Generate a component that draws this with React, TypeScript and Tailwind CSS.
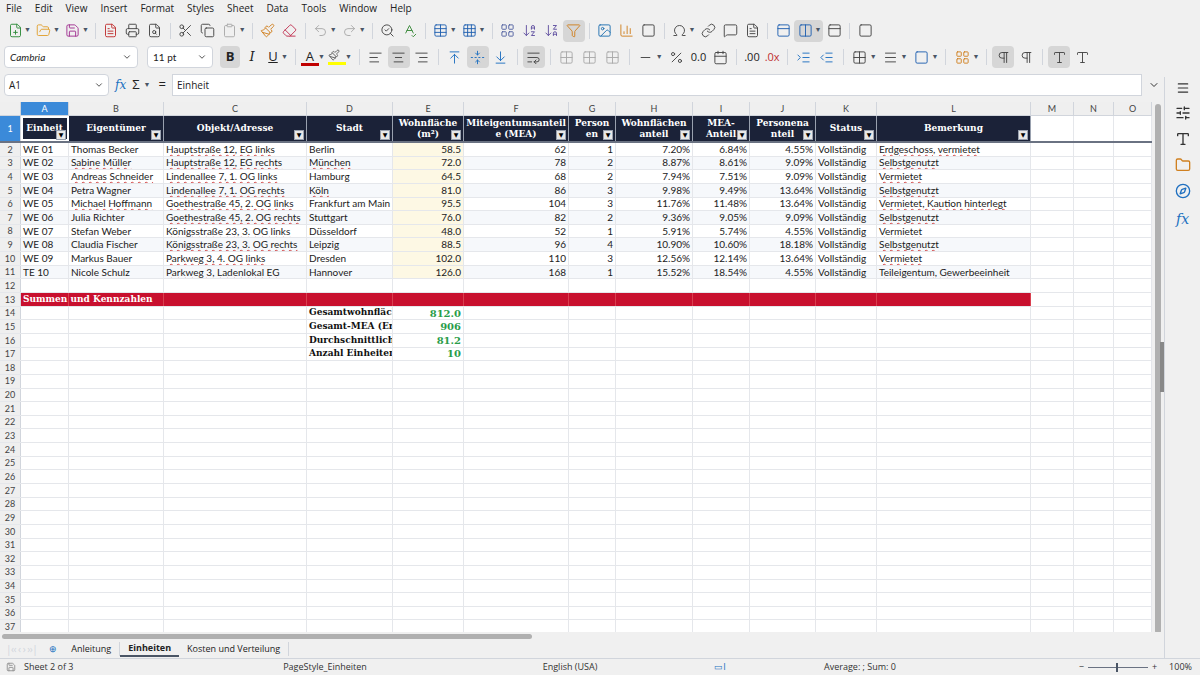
import React from "react";
import {
  FilePlus, FolderOpen, Save, FileText, Printer, FileSearch, Scissors, Copy, Clipboard, Paintbrush, Eraser,
  Undo2, Redo2, SearchCheck, SpellCheck, Table, Grid3x3, ArrowDownAZ, ArrowDownZA, Filter, Image, BarChart3,
  Square, Omega, Link, MessageSquare, PanelTop, Columns2, LayoutGrid, AlignLeft, AlignCenter, AlignRight,
  ArrowUpToLine, FoldVertical, ArrowDownToLine, WrapText, Percent, Calendar, IndentIncrease, IndentDecrease,
  Grid2x2, Minus, Pilcrow, SlidersHorizontal, Type, Folder, Compass, ChevronDown, Menu
} from "lucide-react";

const cols: [string, number][] = [
  ["A", 48], ["B", 95], ["C", 143], ["D", 86], ["E", 71], ["F", 105], ["G", 47], ["H", 77],
  ["I", 57], ["J", 66], ["K", 61], ["L", 154], ["M", 43], ["N", 40], ["O", 38],
];
const RH = 13.65;

const headers = ["Einheit", "Eigentümer", "Objekt/Adresse", "Stadt", "Wohnfläche\n(m²)", "Miteigentumsanteil\ne (MEA)", "Person\nen", "Wohnflächen\nanteil", "MEA-\nAnteil", "Personena\nnteil", "Status", "Bemerkung"];

const data = [
  ["WE 01", "Thomas Becker", "Hauptstraße 12, EG links", "Berlin", "58.5", "62", "1", "7.20%", "6.84%", "4.55%", "Vollständig", "Erdgeschoss, vermietet"],
  ["WE 02", "Sabine Müller", "Hauptstraße 12, EG rechts", "München", "72.0", "78", "2", "8.87%", "8.61%", "9.09%", "Vollständig", "Selbstgenutzt"],
  ["WE 03", "Andreas Schneider", "Lindenallee 7, 1. OG links", "Hamburg", "64.5", "68", "2", "7.94%", "7.51%", "9.09%", "Vollständig", "Vermietet"],
  ["WE 04", "Petra Wagner", "Lindenallee 7, 1. OG rechts", "Köln", "81.0", "86", "3", "9.98%", "9.49%", "13.64%", "Vollständig", "Selbstgenutzt"],
  ["WE 05", "Michael Hoffmann", "Goethestraße 45, 2. OG links", "Frankfurt am Main", "95.5", "104", "3", "11.76%", "11.48%", "13.64%", "Vollständig", "Vermietet, Kaution hinterlegt"],
  ["WE 06", "Julia Richter", "Goethestraße 45, 2. OG rechts", "Stuttgart", "76.0", "82", "2", "9.36%", "9.05%", "9.09%", "Vollständig", "Selbstgenutzt"],
  ["WE 07", "Stefan Weber", "Königsstraße 23, 3. OG links", "Düsseldorf", "48.0", "52", "1", "5.91%", "5.74%", "4.55%", "Vollständig", "Vermietet"],
  ["WE 08", "Claudia Fischer", "Königsstraße 23, 3. OG rechts", "Leipzig", "88.5", "96", "4", "10.90%", "10.60%", "18.18%", "Vollständig", "Selbstgenutzt"],
  ["WE 09", "Markus Bauer", "Parkweg 3, 4. OG links", "Dresden", "102.0", "110", "3", "12.56%", "12.14%", "13.64%", "Vollständig", "Vermietet"],
  ["TE 10", "Nicole Schulz", "Parkweg 3, Ladenlokal EG", "Hannover", "126.0", "168", "1", "15.52%", "18.54%", "4.55%", "Vollständig", "Teileigentum, Gewerbeeinheit"],
];
const rightCols = new Set([4, 5, 6, 7, 8, 9]);
const summary = [["Gesamtwohnfläch", "812.0"], ["Gesamt-MEA (Erw", "906"], ["Durchschnittliche", "81.2"], ["Anzahl Einheiten", "10"]];

const sans = { fontFamily: "Lato, 'Open Sans', sans-serif" };
const serif = { fontFamily: "'DejaVu Serif', 'Liberation Serif', serif" };

function Ico({ I, c = "#444" }: { I: any; c?: string }) {
  return <span className="flex items-center justify-center w-[22px] h-[22px]"><I size={15} color={c} strokeWidth={1.5} /></span>;
}
function Dd() { return <span className="text-[7px] text-gray-600 -ml-0.5 mr-0.5">▼</span>; }
function Sep() { return <span className="w-px h-4 bg-gray-300 mx-1" />; }

function FilterBtn() {
  return <span className="absolute right-[2px] bottom-[1px] w-[10px] h-[10px] bg-[#e8e8e8] border border-gray-400 flex items-center justify-center text-[6px] text-black leading-none">▼</span>;
}

export default function App() {
  return (
    <div className="w-[1200px] h-[675px] bg-[#f0f0f0] flex flex-col overflow-hidden text-[#222]" style={{ fontFamily: "'Open Sans', 'Noto Sans', sans-serif" }}>
      <div className="h-[17px] flex items-center gap-[13px] px-[6px] text-[10px]">
        {["File", "Edit", "View", "Insert", "Format", "Styles", "Sheet", "Data", "Tools", "Window", "Help"].map(m => <span key={m}>{m}</span>)}
      </div>
      <div className="h-[27px] flex items-center px-[4px]">
        <Ico I={FilePlus} c="#2e8b3a" /><Dd /><Ico I={FolderOpen} c="#e0a030" /><Dd /><Ico I={Save} c="#a03090" /><Dd /><Sep />
        <Ico I={FileText} c="#c03030" /><Ico I={Printer} /><Ico I={FileSearch} /><Sep />
        <Ico I={Scissors} /><Ico I={Copy} /><Ico I={Clipboard} c="#aaa" /><Dd /><Sep />
        <Ico I={Paintbrush} c="#d08020" /><Ico I={Eraser} c="#c03050" /><Sep />
        <Ico I={Undo2} c="#aaa" /><Dd /><Ico I={Redo2} c="#aaa" /><Dd /><Sep />
        <Ico I={SearchCheck} /><Ico I={SpellCheck} c="#3a8a3a" /><Sep />
        <Ico I={Table} c="#2060b0" /><Dd /><Ico I={Grid3x3} c="#2060b0" /><Dd /><Sep />
        <Ico I={LayoutGrid} c="#5060a0" /><Ico I={ArrowDownAZ} c="#6050a0" /><Ico I={ArrowDownZA} c="#6050a0" />
        <span className="bg-[#d6d6d6] rounded"><Ico I={Filter} c="#d08020" /></span><Sep />
        <Ico I={Image} c="#2070b0" /><Ico I={BarChart3} c="#d08020" /><Ico I={Square} /><Sep />
        <Ico I={Omega} /><Dd /><Ico I={Link} /><Ico I={MessageSquare} /><Ico I={FileText} /><Sep />
        <Ico I={PanelTop} c="#2060b0" /><span className="bg-[#d6d6d6] rounded flex items-center"><Ico I={Columns2} c="#2060b0" /><Dd /></span><Ico I={PanelTop} /><Sep /><Ico I={Square} />
      </div>
      <div className="h-[26px] flex items-center px-[4px] gap-[1px]">
        <div className="w-[134px] h-[22px] bg-white border border-gray-300 rounded flex items-center justify-between px-[5px] text-[10px] italic" style={sans}>Cambria<ChevronDown size={10} color="#333" /></div>
        <div className="w-[66px] h-[22px] ml-[8px] bg-white border border-gray-300 rounded flex items-center justify-between px-[5px] text-[10px]" style={sans}>11 pt<ChevronDown size={10} color="#333" /></div>
        <span className="ml-[6px] w-[20px] h-[22px] bg-[#d6d6d6] rounded flex items-center justify-center font-bold text-[13px]">B</span>
        <span className="w-[22px] text-center italic text-[13px]" style={serif}>I</span>
        <span className="w-[18px] text-center underline text-[13px]">U</span><Dd /><Sep />
        <span className="w-[18px] text-center text-[13px] border-b-[3px] border-[#c00000] leading-[14px]">A</span><Dd />
        <span className="w-[18px] h-[16px] border-b-[3px] border-[#ffff00]"><Paintbrush size={12} color="#666" /></span><Dd /><Sep />
        <Ico I={AlignLeft} /><span className="bg-[#d6d6d6] rounded"><Ico I={AlignCenter} /></span><Ico I={AlignRight} /><Sep />
        <Ico I={ArrowUpToLine} c="#2070c0" /><span className="bg-[#d6d6d6] rounded"><Ico I={FoldVertical} c="#2070c0" /></span><Ico I={ArrowDownToLine} c="#2070c0" /><Sep />
        <span className="bg-[#d6d6d6] rounded"><Ico I={WrapText} /></span><Sep />
        <Ico I={Grid2x2} c="#aaa" /><Ico I={Grid2x2} c="#aaa" /><Ico I={Grid2x2} c="#aaa" /><Sep />
        <Ico I={Minus} /><Dd /><Ico I={Percent} /><span className="text-[11px] px-[2px]">0.0</span><Ico I={Calendar} /><Sep />
        <span className="text-[11px] px-[2px]">.00</span><span className="text-[11px] px-[2px] text-[#c03030]">.0x</span><Sep />
        <Ico I={IndentIncrease} c="#2070c0" /><Ico I={IndentDecrease} c="#2070c0" /><Sep />
        <Ico I={Grid2x2} /><Dd /><Ico I={Menu} /><Dd /><Ico I={Square} c="#2060b0" /><Dd /><Sep />
        <Ico I={LayoutGrid} c="#d08020" /><Dd /><Sep />
        <span className="bg-[#d6d6d6] rounded"><Ico I={Pilcrow} /></span><Ico I={Pilcrow} /><Sep />
        <span className="bg-[#d6d6d6] rounded"><Ico I={Type} /></span><Ico I={Type} />
      </div>
      <div className="h-[28px] flex items-center px-[4px] gap-[6px] mt-[1px]">
        <div className="w-[105px] h-[22px] bg-white border border-gray-300 rounded flex items-center justify-between px-[4px] text-[10px]">A1<ChevronDown size={10} color="#333" /></div>
        <span className="italic text-[#2070c0] text-[12px]" style={serif}>fx</span>
        <span className="text-[13px]">Σ</span><Dd /><span className="text-[13px]">=</span>
        <div className="flex-1 h-[22px] bg-white border border-gray-300 flex items-center px-[4px] text-[10px]">Einheit</div>
        <ChevronDown size={12} color="#333" />
        <div className="w-[30px]" />
      </div>
      <div className="flex flex-1 min-h-0">
        <div className="flex flex-col w-[1164px]">
          <div className="flex flex-1 min-h-0 mt-[3px]">
            <div className="flex-1 bg-white overflow-hidden text-[10px]" style={sans}>
              <div className="flex h-[14px] bg-[#efefef] border-b border-gray-300">
                <div className="w-[21px] border-r border-gray-300" />
                {cols.map(([n, w]) => (
                  <div key={n} style={{ width: w }} className={`shrink-0 flex items-center justify-center text-[9px] border-r border-gray-300 ${n === "A" ? "bg-[#3b8ad9] text-white" : "text-[#444]"}`}>{n}</div>
                ))}
              </div>
              <div className="flex h-[27px] border-b-2 border-gray-500">
                <div className="w-[21px] bg-[#3b8ad9] text-white text-[9px] flex items-center justify-center border-r border-gray-300">1</div>
                {cols.map(([n, w], i) => (
                  <div key={n} style={{ width: w, ...serif }} className={`shrink-0 relative ${i < 12 ? "bg-[#1b2238] text-white font-bold text-[9px] leading-[11px] border-r border-gray-400 flex items-center justify-center text-center whitespace-pre" : "border-r border-gray-200"} ${i === 0 ? "outline outline-2 outline-white -outline-offset-2" : ""}`}>
                    {i < 12 && <>{headers[i]}<FilterBtn /></>}
                  </div>
                ))}
              </div>
              {Array.from({ length: 36 }, (_, k) => {
                const r = k + 2;
                const d = r <= 11 ? data[r - 2] : null;
                const s = r >= 14 && r <= 17 ? summary[r - 14] : null;
                const red = r === 13;
                return (
                  <div key={r} className="flex border-b border-gray-200" style={{ height: RH }}>
                    <div className="w-[21px] shrink-0 bg-[#efefef] text-[9px] text-[#444] flex items-center justify-center border-r border-gray-300">{r}</div>
                    {cols.map(([n, w], i) => {
                      let content: React.ReactNode = null;
                      let cls = "border-r border-gray-200";
                      let st: React.CSSProperties = { width: w };
                      if (d && i < 12) {
                        content = d[i];
                        if (i === 4) cls += " bg-[#fdf8e4]";
                        else if (r % 2 === 1) cls += " bg-[#f6f8fb]";
                        if (rightCols.has(i)) cls += " justify-end";
                        if ((i === 2 || i === 11) || (i === 1 && [3, 4, 6].includes(r)) || (i === 3 && [3, 5].includes(r))) {
                          content = <span className="underline decoration-wavy decoration-[#d04040] decoration-[0.5px] underline-offset-1">{d[i]}</span>;
                        }
                      }
                      if (red && i < 12) {
                        cls = "bg-[#c8102e] border-r border-[#d84050] text-white font-bold text-[9px]";
                        st = { ...st, ...serif };
                        if (i === 0) content = <span className="whitespace-nowrap">Summen und Kennzahlen</span>;
                      }
                      if (s && i === 3) { content = <span className="whitespace-nowrap font-bold text-[9px] text-[#111]">{s[0]}</span>; st = { ...st, ...serif }; cls += " overflow-hidden"; }
                      if (s && i === 4) { content = s[1]; st = { ...st, ...serif }; cls += " justify-end font-bold text-[#2a9d4a]"; }
                      return <div key={n} style={st} className={`shrink-0 flex items-center px-[2px] whitespace-nowrap ${i !== 0 || !red ? "overflow-hidden" : "overflow-visible z-10"} ${cls}`}>{content}</div>;
                    })}
                  </div>
                );
              })}
            </div>
            <div className="w-[12px] bg-[#f0f0f0] relative">
              <div className="absolute left-[3px] top-[2px] w-[6px] h-[530px] bg-[#b0b0b0] rounded" />
              <div className="absolute left-[8px] top-[240px] w-[4px] h-[50px] bg-[#888]" />
            </div>
          </div>
          <div className="h-[8px] bg-[#f0f0f0] relative">
            <div className="absolute left-[2px] top-[2px] w-[530px] h-[5px] bg-[#b0b0b0] rounded" />
          </div>
          <div className="h-[18px] flex items-center text-[9px]">
            <span className="text-gray-300 px-[6px] text-[10px] tracking-tighter">|‹‹ ‹ › ››|</span>
            <span className="px-[6px] text-[#2070c0]">⊕</span>
            <span className="px-[8px] border-r border-gray-300">Anleitung</span>
            <span className="px-[8px] font-bold border-b-2 border-gray-600 h-[16px] flex items-center">Einheiten</span>
            <span className="px-[8px] border-r border-gray-300">Kosten und Verteilung</span>
          </div>
        </div>
        <div className="w-[36px] border-l border-gray-300 flex flex-col items-center gap-[10px] pt-[4px]" style={{ marginTop: -22 }}>
          <Menu size={14} color="#333" />
          <SlidersHorizontal size={16} color="#333" />
          <Type size={16} color="#333" />
          <Folder size={16} color="#d08020" />
          <Compass size={16} color="#2070c0" />
          <span className="italic text-[#2070c0] text-[14px]" style={serif}>fx</span>
        </div>
      </div>
      <div className="h-[17px] flex items-center text-[9px] text-[#333] border-t border-gray-300">
        <span className="w-[190px] pl-[6px] flex items-center gap-2"><Save size={10} color="#888" />Sheet 2 of 3</span>
        <span className="w-[270px] text-center">PageStyle_Einheiten</span>
        <span className="w-[220px] text-center">English (USA)</span>
        <span className="w-[80px] text-center text-[#2070c0]">▭I</span>
        <span className="w-[200px] text-center">Average: ; Sum: 0</span>
        <span className="flex-1 flex items-center gap-1 justify-end pr-[8px]">−<span className="w-[60px] h-px bg-gray-500 relative"><span className="absolute left-[28px] -top-[4px] w-[2px] h-[9px] bg-gray-600" /></span>+ <span className="ml-2">100%</span></span>
      </div>
    </div>
  );
}
